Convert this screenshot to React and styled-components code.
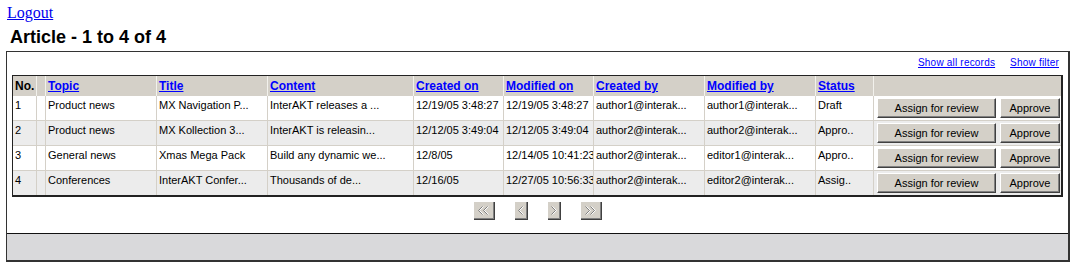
import React from 'react';
import styled, { createGlobalStyle } from 'styled-components';

const GlobalStyle = createGlobalStyle`
  body {
    margin: 4px 6px;
    background: #fff;
    font-family: "Liberation Serif", serif;
  }
`;

const LogoutLink = styled.a`
  display: inline-block;
  margin-left: 1px;
  font-size: 16px;
  color: #0000ee;
  text-decoration: underline;
`;

const Heading = styled.h1`
  margin: 4px 0 3px;
  padding-left: 4px;
  font: bold 18px/22px "Liberation Sans", Arial, sans-serif;
  color: #000;
`;

const Panel = styled.div`
  border-style: solid;
  border-color: #333;
  border-width: 1px 2px 2px 1px;
  background: #fff;
`;

const Toolbar = styled.div`
  display: flex;
  justify-content: flex-end;
  gap: 15px;
  padding: 5px 9px 6px 5px;
  font: 10px/12px "Liberation Sans", Arial, sans-serif;
  letter-spacing: 0.2px;
`;

const ToolLink = styled.a`
  color: #0000ff;
  text-decoration: underline;
`;

const GridWrap = styled.div`
  padding: 0 6px 0 5px;
`;

const Grid = styled.table`
  box-sizing: border-box;
  width: 1051px;
  table-layout: fixed;
  border-collapse: separate;
  border-spacing: 0;
  border-style: solid;
  border-color: #222;
  border-width: 1px 2px 2px 1px;
  font: 11px "Liberation Sans", Arial, sans-serif;
  color: #000;
`;

const Col = styled.col`
  width: ${(p) => p.$w}px;
`;

const HeadCell = styled.th`
  height: 20px;
  padding: 0 2px;
  background: #d4d0c8;
  border-right: ${(p) => (p.$last ? 'none' : '1px solid #f2f1ec')};
  text-align: left;
  vertical-align: middle;
  font-size: 12px;
  font-weight: bold;
  white-space: nowrap;
  overflow: hidden;
`;

const SortLink = styled.a`
  color: #0000ff;
  text-decoration: underline;
`;

const Row = styled.tr`
  background: ${(p) => (p.$alt ? '#ececec' : '#fff')};
`;

const Cell = styled.td`
  height: 21px;
  padding: 3px 2px 0 2px;
  vertical-align: top;
  white-space: nowrap;
  overflow: hidden;
  border-right: 1px solid #d4d0c8;
  border-bottom: ${(p) => (p.$lastRow ? 'none' : '1px solid #d4d0c8')};
`;

const ActionCell = styled.td`
  height: 22px;
  padding: 2px 1px 0 3px;
  vertical-align: top;
  white-space: nowrap;
  border-bottom: ${(p) => (p.$lastRow ? 'none' : '1px solid #d4d0c8')};
`;

const Actions = styled.div`
  display: flex;
  gap: 4px;
`;

const Button = styled.button`
  box-sizing: border-box;
  width: ${(p) => p.$w}px;
  height: 20px;
  padding: 0;
  background: #d4d0c8;
  border-style: solid;
  border-width: 1px;
  border-color: #fff #404040 #404040 #fff;
  box-shadow: inset -1px -1px 0 #808080;
  font: 11px "Liberation Sans", Arial, sans-serif;
  color: #000;
`;

const Pager = styled.div`
  display: flex;
  justify-content: center;
  align-items: flex-start;
  gap: 20px;
  padding: 5px 0 13px;
`;

const PagerButton = styled.span`
  box-sizing: border-box;
  display: flex;
  align-items: center;
  justify-content: center;
  width: ${(p) => p.$w}px;
  height: 18px;
  background: #d4d0c8;
  border-right: 1px solid #404040;
  border-bottom: 1px solid #404040;
  box-shadow: inset -1px -1px 0 #808080;
`;

const Footer = styled.div`
  height: 26px;
  border-top: 1px solid #111;
  background: #d9d9db;
`;

const columns = [
  { label: 'No.', w: 24, plain: true },
  { label: '', w: 9, plain: true },
  { label: 'Topic', w: 111 },
  { label: 'Title', w: 111 },
  { label: 'Content', w: 146 },
  { label: 'Created on', w: 90 },
  { label: 'Modified on', w: 90 },
  { label: 'Created by', w: 111 },
  { label: 'Modified by', w: 111 },
  { label: 'Status', w: 58 },
  { label: '', w: 187, plain: true },
];

const rows = [
  ['1', '', 'Product news', 'MX Navigation P...', 'InterAKT releases a ...', '12/19/05 3:48:27', '12/19/05 3:48:27', 'author1@interak...', 'author1@interak...', 'Draft'],
  ['2', '', 'Product news', 'MX Kollection 3...', 'InterAKT is releasin...', '12/12/05 3:49:04', '12/12/05 3:49:04', 'author2@interak...', 'author2@interak...', 'Appro..'],
  ['3', '', 'General news', 'Xmas Mega Pack', 'Build any dynamic we...', '12/8/05', '12/14/05 10:41:23', 'author2@interak...', 'editor1@interak...', 'Appro..'],
  ['4', '', 'Conferences', 'InterAKT Confer...', 'Thousands of de...', '12/16/05', '12/27/05 10:56:33', 'author2@interak...', 'editor2@interak...', 'Assig..'],
];

// disabled chevron, drawn grey with a white emboss
function Chevron({ dir, count }) {
  const width = count === 2 ? 10 : 5;
  const shapes = [];
  for (let i = 0; i < count; i++) {
    const x = i * 5;
    const pts = dir === 'left'
      ? `${x + 4.5},0.5 ${x + 0.5},4.5 ${x + 4.5},8.5`
      : `${x + 0.5},0.5 ${x + 4.5},4.5 ${x + 0.5},8.5`;
    shapes.push(<polyline key={'w' + i} points={pts} transform="translate(1,0)" fill="none" stroke="#fff" strokeWidth="1" />);
    shapes.push(<polyline key={'g' + i} points={pts} fill="none" stroke="#808080" strokeWidth="1" />);
  }
  return (
    <svg width={width + 1} height="9" viewBox={`0 0 ${width + 1} 9`}>
      {shapes}
    </svg>
  );
}

export default function App() {
  return (
    <>
      <GlobalStyle />
      <LogoutLink href="#">Logout</LogoutLink>
      <Heading>Article - 1 to 4 of 4</Heading>
      <Panel>
        <Toolbar>
          <ToolLink href="#">Show all records</ToolLink>
          <ToolLink href="#">Show filter</ToolLink>
        </Toolbar>
        <GridWrap>
          <Grid>
            <colgroup>
              {columns.map((c, i) => <Col key={i} $w={c.w} />)}
            </colgroup>
            <thead>
              <tr>
                {columns.map((c, i) => (
                  <HeadCell key={i} $last={i === columns.length - 1}>
                    {c.plain ? c.label : <SortLink href="#">{c.label}</SortLink>}
                  </HeadCell>
                ))}
              </tr>
            </thead>
            <tbody>
              {rows.map((r, ri) => (
                <Row key={ri} $alt={ri % 2 === 1}>
                  {r.map((v, ci) => (
                    <Cell key={ci} $lastRow={ri === rows.length - 1}>{v}</Cell>
                  ))}
                  <ActionCell $lastRow={ri === rows.length - 1}>
                    <Actions>
                      <Button $w={119}>Assign for review</Button>
                      <Button $w={60}>Approve</Button>
                    </Actions>
                  </ActionCell>
                </Row>
              ))}
            </tbody>
          </Grid>
        </GridWrap>
        <Pager>
          <PagerButton $w={21}><Chevron dir="left" count={2} /></PagerButton>
          <PagerButton $w={13}><Chevron dir="left" count={1} /></PagerButton>
          <PagerButton $w={13}><Chevron dir="right" count={1} /></PagerButton>
          <PagerButton $w={21}><Chevron dir="right" count={2} /></PagerButton>
        </Pager>
        <Footer />
      </Panel>
    </>
  );
}
